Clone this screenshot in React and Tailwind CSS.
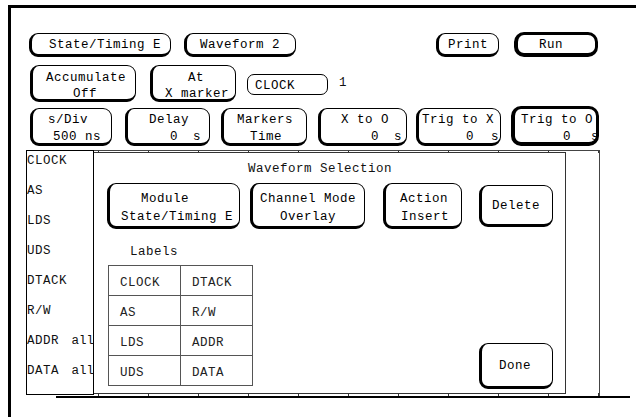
import React from "react";

const soft = "border border-l-[3px] border-b-[3px] rounded-[9px]";
const hard = "border-[3px] border-l-[4px] border-b-[4px] rounded-[10px]";

// one soft key of the analyzer screen
const Key = ({ className = "", children }) => (
  <div className={`shrink-0 flex flex-col border-black bg-white text-black ${className}`}>{children}</div>
);

const L = ({ className = "", children }) => (
  <div className={`whitespace-pre ${className}`}>{children}</div>
);

// value line like "0   s"
const Val = ({ className = "", gap = "ml-[15px]" }) => (
  <div className={`flex ${className}`}>
    <span>0</span>
    <span className={gap}>s</span>
  </div>
);

const signals = ["CLOCK", "AS", "LDS", "UDS", "DTACK", "R/W", "ADDR", "DATA"];
const picked = [
  ["CLOCK", "DTACK"],
  ["AS", "R/W"],
  ["LDS", "ADDR"],
  ["UDS", "DATA"],
];
const ticks = [4, 54, 104, 154, 204, 254, 304, 354, 404, 454, 504];

export default function App() {
  return (
    <div className="w-[636px] h-[417px] bg-white pt-[5px] pl-[8px] overflow-hidden font-['Liberation_Mono','DejaVu_Sans_Mono',monospace] text-[12.5px] tracking-[0.5px] leading-[14px] text-[#111]">
      <div className="h-full border-t-[3px] border-l-[3px] border-black flex flex-col">
        {/* Row 1 */}
        <div className="flex items-start mt-[25px]">
          <Key className={`${soft} ml-[18px] w-[142px] h-[24px] pt-[2px] justify-center`}>
            <L className="pl-[17px]">State/Timing E</L>
          </Key>
          <Key className={`${soft} ml-[13px] w-[112px] h-[24px] pt-[2px] justify-center`}>
            <L className="pl-[13px]">Waveform 2</L>
          </Key>
          <Key className={`${soft} ml-[140px] w-[63px] h-[24px] pt-[2px] justify-center`}>
            <L className="pl-[9px]">Print</L>
          </Key>
          <Key className={`${hard} ml-[15px] -mt-[1px] w-[84px] h-[25px] pt-[2px] justify-center`}>
            <L className="pl-[21px]">Run</L>
          </Key>
        </div>

        {/* Row 2 */}
        <div className="flex items-start mt-[8px]">
          <Key className={`${soft} ml-[19px] w-[106px] h-[37px] pt-[4px] leading-[16px]`}>
            <L className="pl-[13px]">Accumulate</L>
            <L className="pl-[40px]">Off</L>
          </Key>
          <Key className={`${soft} ml-[14px] w-[86px] h-[37px] pt-[4px] leading-[16px]`}>
            <L className="pl-[35px]">At</L>
            <L className="pl-[12px]">X marker</L>
          </Key>
          <Key className="border rounded-[7px] ml-[11px] mt-[9px] w-[81px] h-[21px] pt-[2px] justify-center">
            <L className="pl-[7px]">CLOCK</L>
          </Key>
          <div className="ml-[11px] mt-[11px]">1</div>
        </div>

        {/* Row 3 */}
        <div className="flex items-start mt-[6px]">
          <Key className={`${soft} ml-[19px] w-[82px] h-[38px] pt-[3px] leading-[17px]`}>
            <L className="pl-[15px]">s/Div</L>
            <L className="pl-[20px]">500 ns</L>
          </Key>
          <Key className={`${soft} ml-[13px] w-[85px] h-[38px] pt-[3px] leading-[17px]`}>
            <L className="pl-[21px]">Delay</L>
            <Val className="pl-[42px]" />
          </Key>
          <Key className={`${soft} ml-[11px] w-[86px] h-[38px] pt-[3px] leading-[17px]`}>
            <L className="pl-[13px]">Markers</L>
            <L className="pl-[26px]">Time</L>
          </Key>
          <Key className={`${soft} ml-[11px] w-[89px] h-[38px] pt-[3px] leading-[17px]`}>
            <L className="pl-[20px]">X to O</L>
            <Val className="pl-[50px]" />
          </Key>
          <Key className={`${soft} ml-[9px] w-[85px] h-[38px] pt-[3px] leading-[17px]`}>
            <L className="pl-[3px]">Trig to X</L>
            <Val className="pl-[47px]" gap="ml-[17px]" />
          </Key>
          <Key className={`${hard} ml-[10px] -mt-[2px] w-[88px] h-[40px] pt-[3px] leading-[17px]`}>
            <L className="pl-[6px]">Trig to O</L>
            <Val className="pl-[48px]" gap="ml-[20px]" />
          </Key>
        </div>

        {/* Label column + waveform area */}
        <div className="flex items-start mt-[4px] h-[246px]">
          <div className="ml-[15px] w-[68px] h-[245px] border border-black flex flex-col pt-[3px]">
            {signals.map((s, i) => (
              <div key={s} className="h-[30px] flex">
                <span>{s}</span>
                {i >= 6 && <span className="ml-auto -mr-[1px] tracking-[0px]">all</span>}
              </div>
            ))}
          </div>

          <div className="relative w-[506px] h-[246px] border-t border-r border-[#444]">
            <svg className="absolute left-0 top-0" width="506" height="245">
              {ticks.map((x) => (
                <g key={x} stroke="#333" strokeWidth="1">
                  <line x1={x + 0.5} y1="0" x2={x + 0.5} y2="2" />
                  <line x1={x + 0.5} y1="242" x2={x + 0.5} y2="245" />
                </g>
              ))}
            </svg>

            {/* Waveform Selection dialog */}
            <div className="relative mt-[1px] w-[472px] h-[242px] border-t border-r border-b border-[#333] bg-white flex flex-col">
              <L className="pl-[154px] pt-[9px]">Waveform Selection</L>

              <div className="flex items-start mt-[7px]">
                <Key className={`${soft} ml-[13px] w-[133px] h-[46px] pt-[6px] leading-[18px]`}>
                  <L className="pl-[31px]">Module</L>
                  <L className="pl-[11px]">State/Timing E</L>
                </Key>
                <Key className={`${soft} ml-[10px] w-[115px] h-[46px] pt-[6px] leading-[18px]`}>
                  <L className="pl-[7px]">Channel Mode</L>
                  <L className="pl-[27px]">Overlay</L>
                </Key>
                <Key className={`${soft} ml-[18px] w-[79px] h-[46px] pt-[6px] leading-[18px]`}>
                  <L className="pl-[14px]">Action</L>
                  <L className="pl-[15px]">Insert</L>
                </Key>
                <Key className={`${soft} ml-[17px] mt-[2px] w-[74px] h-[42px] pt-[2px] justify-center`}>
                  <L className="pl-[10px]">Delete</L>
                </Key>
              </div>

              <L className="pl-[36px] mt-[16px]">Labels</L>

              <div className="flex items-start mt-[6px]">
                <div className="ml-[14px] border-l border-t border-[#555] text-[#222]">
                  {picked.map((row) => (
                    <div key={row[0]} className="flex">
                      {row.map((c) => (
                        <div key={c} className="w-[72px] h-[30px] border-r border-b border-[#555] pl-[11px] pt-[10px]">
                          {c}
                        </div>
                      ))}
                    </div>
                  ))}
                </div>
                <Key className={`${soft} ml-[226px] mt-[78px] w-[74px] h-[46px] pt-[2px] justify-center`}>
                  <L className="pl-[17px]">Done</L>
                </Key>
              </div>
            </div>
          </div>
        </div>
        <div className="ml-[45px] w-[574px] h-[2px] bg-black" />
      </div>
    </div>
  );
}
